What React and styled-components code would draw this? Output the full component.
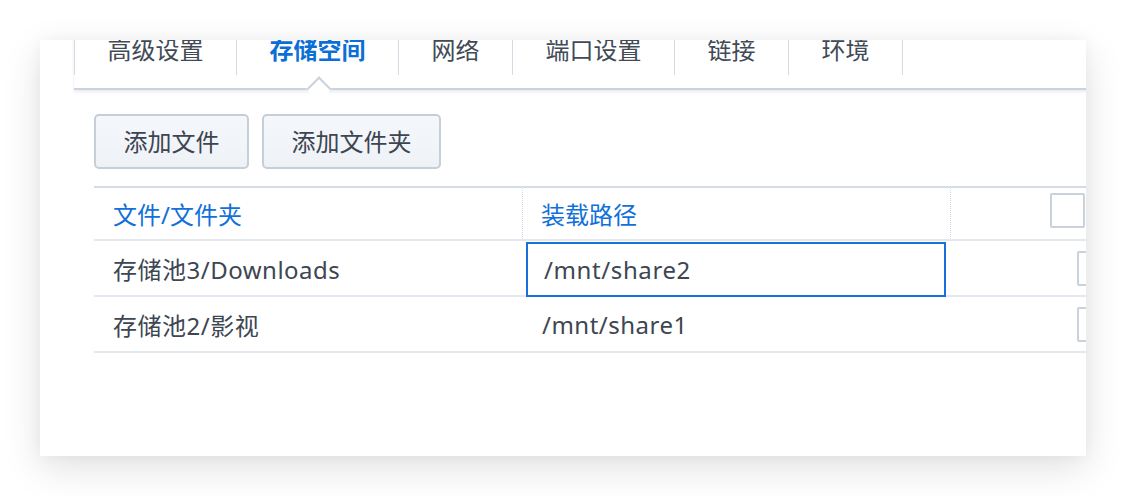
import React from "react";
import styled, { createGlobalStyle } from "styled-components";

const GlobalStyle = createGlobalStyle`
  html, body { margin: 0; padding: 0; background: #ffffff; }
  body {
    font-family: "Noto Sans", "Noto Sans CJK SC", sans-serif;
    color: #3d4651;
  }
  * { box-sizing: border-box; }
`;

const Page = styled.div`
  width: 1126px;
  height: 496px;
  padding: 40px 0 0 40px;
  overflow: hidden;
`;

const Card = styled.div`
  width: 1046px;
  height: 416px;
  background: #ffffff;
  overflow: hidden;
  box-shadow: 0 12px 36px rgba(0, 0, 0, 0.12), 0 0 14px rgba(0, 0, 0, 0.04);
`;

const Content = styled.div`
  width: 1120px;
  padding-left: 34px;
`;

const TabBar = styled.div`
  display: flex;
  margin-top: -15px;
  padding-bottom: 13px;
  border-bottom: 2px solid #cbd3dd;
  box-shadow: 0 2px 3px rgba(203, 211, 221, 0.45);
`;

const Tab = styled.div`
  position: relative;
  height: 50px;
  line-height: 50px;
  padding: 0 32.5px;
  border-left: 1px solid #d3dae3;
  font-size: 24px;
  white-space: nowrap;
  color: ${(p) => (p.$active ? "#0b6fd8" : "#414a55")};
  font-weight: ${(p) => (p.$active ? 700 : 400)};
  &:last-child { border-right: 1px solid #d3dae3; }
  ${(p) =>
    p.$active &&
    `
    &::after {
      content: "";
      position: absolute;
      left: calc(50% - 8px);
      top: calc(100% + 5px);
      width: 16px;
      height: 16px;
      background: #ffffff;
      border-top: 2px solid #cbd3dd;
      border-left: 2px solid #cbd3dd;
      transform: rotate(45deg);
    }
  `}
`;

const Body = styled.div`
  padding: 24px 0 0 20px;
`;

const Toolbar = styled.div`
  display: flex;
  gap: 13px;
`;

const Button = styled.button`
  height: 55px;
  padding: 0 27.5px;
  border: 2px solid #c6ced8;
  border-radius: 5px;
  background: linear-gradient(#f5f7fb, #eef2f7);
  font-family: inherit;
  font-size: 24px;
  color: #3c4550;
  line-height: 1;
`;

const Table = styled.div`
  margin-top: 17px;
  width: 1040px;
  display: grid;
  grid-template-columns: 429px 428px 1fr;
`;

const HeadCell = styled.div`
  height: 55px;
  display: flex;
  align-items: center;
  padding-left: ${(p) => p.$pad ?? 19}px;
  padding-bottom: ${(p) => p.$lift ?? 0}px;
  border-top: 2px solid #d3dbe4;
  border-bottom: 2px solid #e3e8ee;
  border-right: ${(p) => (p.$divider ? "1px dotted #cfd7e0" : "none")};
  font-size: 24px;
  color: #1170d9;
  white-space: nowrap;
`;

const Cell = styled.div`
  height: 56px;
  display: flex;
  align-items: ${(p) => (p.$top ? "flex-start" : "center")};
  padding-left: ${(p) => p.$pad ?? 19}px;
  padding-top: ${(p) => (p.$top ? 1 : 0)}px;
  border-bottom: 2px solid #e3e8ee;
  font-size: 24px;
  color: #3d4651;
  white-space: nowrap;
  letter-spacing: 0.5px;
`;

const PathInput = styled.input`
  width: 420px;
  height: 55px;
  flex: none;
  border: 2px solid #1a6fdc;
  border-radius: 0;
  padding: 0 0 0 16px;
  font-family: inherit;
  font-size: 24px;
  letter-spacing: 0.6px;
  color: #3d4651;
  background: #ffffff;
  outline: none;
`;

const Checkbox = styled.span`
  display: block;
  flex: none;
  width: 35px;
  height: 35px;
  border: 2px solid #c9d1da;
  border-radius: 2px;
  background: #ffffff;
`;

const tabs = ["高级设置", "存储空间", "网络", "端口设置", "链接", "环境"];

const rows = [
  { name: "存储池3/Downloads", path: "/mnt/share2", editing: true },
  { name: "存储池2/影视", path: "/mnt/share1", editing: false },
];

export default function App() {
  return (
    <>
      <GlobalStyle />
      <Page>
        <Card>
          <Content>
            <TabBar>
              {tabs.map((t) => (
                <Tab key={t} $active={t === "存储空间"}>
                  {t}
                </Tab>
              ))}
            </TabBar>
            <Body>
              <Toolbar>
                <Button>添加文件</Button>
                <Button>添加文件夹</Button>
              </Toolbar>
              <Table>
                <HeadCell $divider>文件/文件夹</HeadCell>
                <HeadCell $divider $pad={18}>装载路径</HeadCell>
                <HeadCell $pad={99} $lift={6}>
                  <Checkbox />
                </HeadCell>
                {rows.map((r) => (
                  <React.Fragment key={r.name}>
                    <Cell>{r.name}</Cell>
                    {r.editing ? (
                      <Cell $pad={3} $top>
                        <PathInput defaultValue={r.path} />
                      </Cell>
                    ) : (
                      <Cell>{r.path}</Cell>
                    )}
                    <Cell $pad={126}>
                      <Checkbox />
                    </Cell>
                  </React.Fragment>
                ))}
              </Table>
            </Body>
          </Content>
        </Card>
      </Page>
    </>
  );
}
